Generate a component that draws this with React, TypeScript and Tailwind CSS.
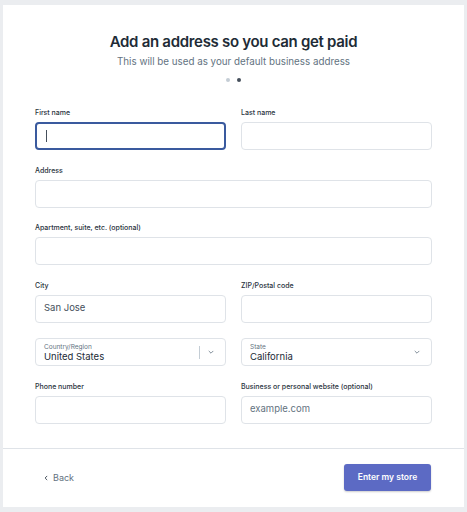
import React from "react";

function Label({ children }: { children: React.ReactNode }) {
  return (
    <div className="h-[10px] mb-[4px] text-[7px] leading-[10px] font-medium text-[#2a333d]">
      {children}
    </div>
  );
}

function Input({
  value,
  placeholder,
  focused,
}: {
  value?: string;
  placeholder?: string;
  focused?: boolean;
}) {
  return (
    <div
      className={
        "h-[28px] rounded-[4px] bg-white flex items-center px-[8px] text-[9.5px] " +
        (focused
          ? "border-[2px] border-[#3a5a9e] px-[7px]"
          : "border border-[#dfe3e8]")
      }
    >
      {focused && <div className="w-px h-[12px] bg-[#454f5b] ml-[1px]" />}
      {value && <span className="text-[#454f5b]">{value}</span>}
      {placeholder && <span className="text-[#637381]">{placeholder}</span>}
    </div>
  );
}

function Field({
  label,
  value,
  placeholder,
  focused,
}: {
  label: string;
  value?: string;
  placeholder?: string;
  focused?: boolean;
}) {
  return (
    <div>
      <Label>{label}</Label>
      <Input value={value} placeholder={placeholder} focused={focused} />
    </div>
  );
}

function Chevron() {
  return (
    <svg width="8" height="8" viewBox="0 0 20 20" className="text-[#637381]">
      <path
        d="M5 8l5 5 5-5"
        fill="none"
        stroke="currentColor"
        strokeWidth="2"
        strokeLinecap="round"
        strokeLinejoin="round"
      />
    </svg>
  );
}

function Select({
  label,
  value,
  divider,
}: {
  label: string;
  value: string;
  divider?: boolean;
}) {
  return (
    <div className="h-[28px] rounded-[4px] border border-[#dfe3e8] bg-white flex items-center pl-[8px] pr-[10px]">
      <div className="flex-1 flex flex-col">
        <span className="text-[6.5px] leading-[8px] text-[#637381]">{label}</span>
        <span className="text-[9.5px] leading-[11px] text-[#212b36]">{value}</span>
      </div>
      {divider && <div className="w-px h-[13px] bg-[#c4cdd5] mr-[7px]" />}
      <Chevron />
    </div>
  );
}

export default function App() {
  return (
    <div
      className="w-[467px] h-[512px] bg-[#ebedf0] pt-[5px] pl-[3px] pr-[3px] pb-[5px]"
      style={{ fontFamily: "Inter, 'Noto Sans', sans-serif" }}
    >
      <div className="bg-white w-[461px] h-[502px] flex flex-col">
        <div className="pt-[26px] flex flex-col items-center">
          <h1 className="text-[15px] leading-[22px] font-semibold text-[#212b36] tracking-[-0.3px]">
            Add an address so you can get paid
          </h1>
          <p className="mt-[2px] text-[9.8px] leading-[14px] text-[#637381]">
            This will be used as your default business address
          </p>
          <div className="mt-[9px] flex gap-[7px]">
            <div className="w-[4px] h-[4px] rounded-full bg-[#c4cdd5]" />
            <div className="w-[4px] h-[4px] rounded-full bg-[#454f5b]" />
          </div>
        </div>

        <div className="mt-[26px] px-[32px] grid grid-cols-2 gap-x-[15px] gap-y-[15.5px]">
          <Field label="First name" focused />
          <Field label="Last name" />
          <div className="col-span-2">
            <Field label="Address" />
          </div>
          <div className="col-span-2">
            <Field label="Apartment, suite, etc. (optional)" />
          </div>
          <Field label="City" value="San Jose" />
          <Field label="ZIP/Postal code" />
          <Select label="Country/Region" value="United States" divider />
          <Select label="State" value="California" />
          <Field label="Phone number" />
          <Field label="Business or personal website (optional)" placeholder="example.com" />
        </div>

        <div className="mt-[24px] border-t border-[#dfe3e8] flex-1 flex items-center justify-between pl-[40px] pr-[33px]">
          <div className="flex items-center gap-[4px] text-[9px] text-[#637381]">
            <svg width="6" height="6" viewBox="0 0 10 10">
              <path
                d="M6.5 2L3.5 5l3 3"
                fill="none"
                stroke="#454f5b"
                strokeWidth="1.6"
                strokeLinecap="round"
                strokeLinejoin="round"
              />
            </svg>
            <span>Back</span>
          </div>
          <button className="w-[87px] h-[27px] rounded-[3px] bg-[#5c6ac4] text-white text-[8.5px] font-semibold shadow-[0_1px_2px_rgba(0,0,0,0.2)]">
            Enter my store
          </button>
        </div>
      </div>
    </div>
  );
}
